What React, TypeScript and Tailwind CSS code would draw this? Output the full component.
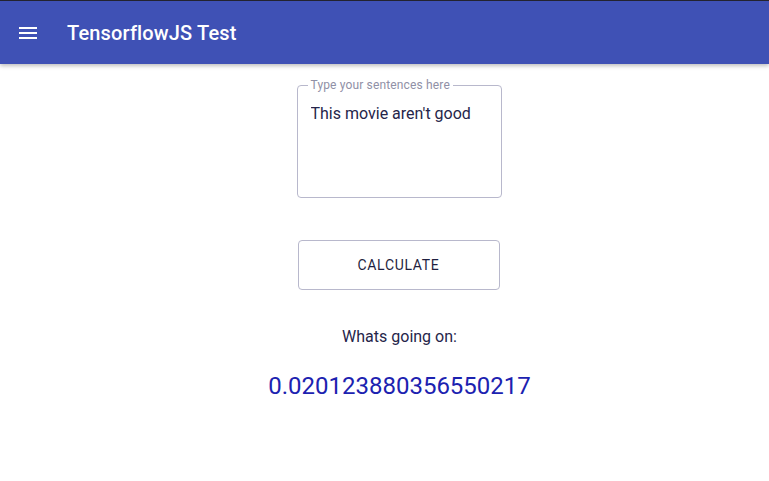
import React, { useState } from 'react'

const App = () => {
  const [text, setText] = useState("This movie aren't good")

  return (
    <div className="min-h-screen bg-white font-['Roboto',sans-serif]">
      {/*Header*/}
      <div className="border-t border-[#23232f] bg-[#3f51b5] h-16 flex items-center px-4 shadow-[0_2px_4px_rgba(0,0,0,0.25)]">
        <svg viewBox="0 0 24 24" className="w-6 h-6 fill-white">
          <path d="M3 18h18v-2H3v2zm0-5h18v-2H3v2zm0-7v2h18V6H3z" />
        </svg>
        <h1 className="ml-[27px] text-white text-[20px] font-medium tracking-[0.15px]">TensorflowJS Test</h1>
      </div>

      <div className="flex flex-col items-center pl-[30px]">
        {/*Input*/}
        <fieldset className="mt-[14px] w-[205px] h-[120px] border border-[#b8b8cc] rounded px-[13px] ml-[-1px]">
          <legend className="px-[3px] ml-[-3px] text-[12px] leading-[14px] tracking-[0.15px] text-[#9090a6]">Type your sentences here</legend>
          <textarea
            value={text}
            onChange={(e) => setText(e.target.value)}
            className="w-full h-[90px] mt-[12px] resize-none outline-none text-[16px] leading-[19px] text-[#25254a]"
          />
        </fieldset>

        {/*Button*/}
        <button className="mt-[42px] ml-[-2px] w-[202px] h-[50px] border border-[#b8b8cc] rounded text-[14px] font-normal tracking-[0.7px] text-[#1f1f3f] uppercase">
          Calculate
        </button>

        <p className="mt-[35px] text-[16px] text-[#25254a]">Whats going on:</p>
        <p className="mt-[19px] text-[24px] text-[#1c22b0]">0.020123880356550217</p>
      </div>
    </div>
  )
}

export default App
